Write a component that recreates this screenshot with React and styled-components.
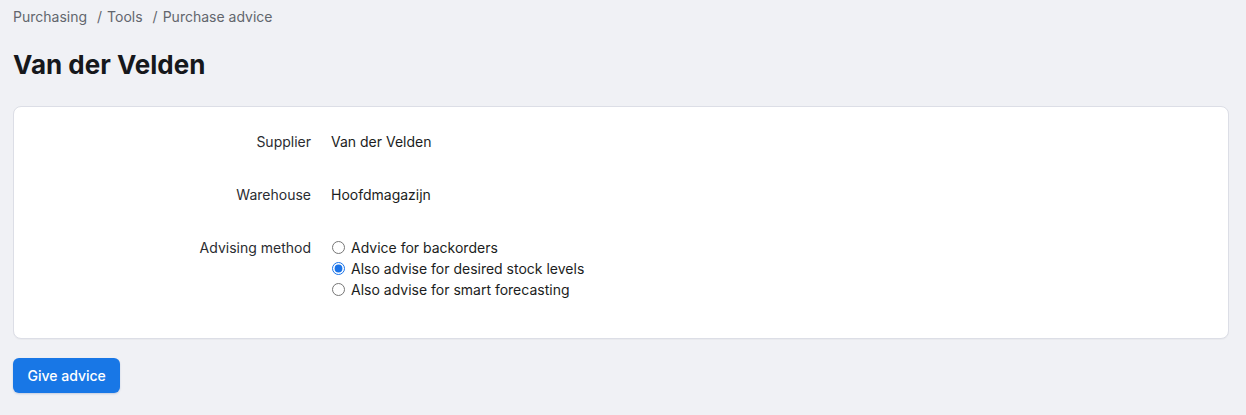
import React, { useState } from 'react';
import styled, { createGlobalStyle } from 'styled-components';

const GlobalStyle = createGlobalStyle`
  html, body {
    margin: 0;
    padding: 0;
    background: #f0f1f5;
    font-family: Inter, "Noto Sans", "Liberation Sans", sans-serif;
    color: #1b1d21;
  }
`;

const Page = styled.div`
  padding: 7px 17px 20px 13px;
`;

const Breadcrumbs = styled.nav`
  display: flex;
  align-items: center;
  font-size: 14px;
  line-height: 20px;
  color: #62666d;
`;

const Crumb = styled.span`
  &:not(:first-child)::before {
    content: '/';
    margin: 0 5px 0 10px;
  }
`;

const Title = styled.h1`
  margin: 21px 0 24px;
  font-size: 26px;
  line-height: 34px;
  font-weight: 700;
  letter-spacing: 0;
  color: #16181c;
`;

const Card = styled.section`
  background: #fff;
  border: 1px solid #dcdee6;
  border-radius: 8px;
  padding: 24px 0 38px;
  display: flex;
  flex-direction: column;
  gap: 32px;
  box-shadow: 0 1px 1px rgba(20, 24, 40, 0.03);
`;

const Row = styled.div`
  display: grid;
  grid-template-columns: 297px 1fr;
  column-gap: 20px;
  font-size: 14px;
  line-height: 21px;
`;

const Label = styled.div`
  text-align: right;
  color: #2a2c31;
`;

const Value = styled.div`
  color: #1b1d21;
`;

const RadioList = styled.div`
  display: flex;
  flex-direction: column;
`;

const RadioLabel = styled.label`
  display: flex;
  align-items: center;
  gap: 6px;
  cursor: pointer;
`;

const Radio = styled.input.attrs({ type: 'radio' })`
  margin: 0 0 0 1px;
  width: 13px;
  height: 13px;
  accent-color: #1a73e8;
`;

const Button = styled.button`
  margin-top: 19px;
  height: 35px;
  padding: 0 14.5px;
  border: none;
  border-radius: 6px;
  background: #1877e6;
  color: #fff;
  font-family: inherit;
  font-size: 14px;
  font-weight: 500;
  box-shadow: 0 1px 2px rgba(16, 60, 140, 0.2);
  cursor: pointer;
`;

const methods = [
  { id: 'backorders', label: 'Advice for backorders' },
  { id: 'stock', label: 'Also advise for desired stock levels' },
  { id: 'forecast', label: 'Also advise for smart forecasting' },
];

export default function App() {
  const [method, setMethod] = useState('stock');

  return (
    <Page>
      <GlobalStyle />
      <Breadcrumbs>
        <Crumb>Purchasing</Crumb>
        <Crumb>Tools</Crumb>
        <Crumb>Purchase advice</Crumb>
      </Breadcrumbs>
      <Title>Van der Velden</Title>
      <Card>
        <Row>
          <Label>Supplier</Label>
          <Value>Van der Velden</Value>
        </Row>
        <Row>
          <Label>Warehouse</Label>
          <Value>Hoofdmagazijn</Value>
        </Row>
        <Row>
          <Label>Advising method</Label>
          <RadioList>
            {methods.map((m) => (
              <RadioLabel key={m.id}>
                <Radio
                  name="method"
                  checked={method === m.id}
                  onChange={() => setMethod(m.id)}
                />
                {m.label}
              </RadioLabel>
            ))}
          </RadioList>
        </Row>
      </Card>
      <Button>Give advice</Button>
    </Page>
  );
}
